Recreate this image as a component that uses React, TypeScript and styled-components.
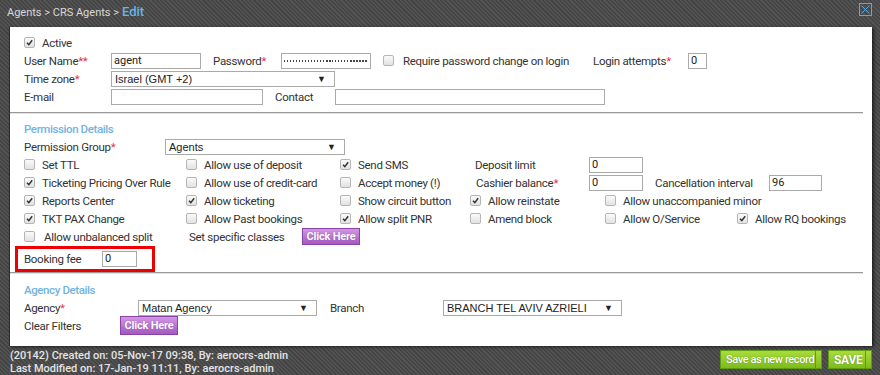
import React from 'react';
import styled, { createGlobalStyle } from 'styled-components';

const GlobalStyle = createGlobalStyle`
  html, body {
    margin: 0;
    padding: 0;
  }
  body {
    width: 880px;
    height: 375px;
    overflow: hidden;
    font-family: Roboto, "Liberation Sans", Arial, sans-serif;
    background-color: #4b4b4b;
    background-image: repeating-linear-gradient(
      45deg,
      #444 0px,
      #444 1.5px,
      #535353 1.5px,
      #535353 3px
    );
  }
`;

const Page = styled.div`
  width: 880px;
  height: 375px;
  display: flex;
  flex-direction: column;
  box-sizing: border-box;
  padding: 0 8px 0 9px;
`;

const TopBar = styled.div`
  height: 27px;
  display: flex;
  align-items: center;
  justify-content: space-between;
  margin-left: -2px;
`;

const Crumbs = styled.div`
  font-size: 11px;
  color: #d8d8d8;
  display: flex;
  align-items: baseline;
  gap: 3px;
  margin-top: -3px;
`;

const CrumbCurrent = styled.span`
  font-size: 13px;
  font-weight: 500;
  color: #66b4ea;
`;

const CloseBox = styled.div`
  width: 11px;
  height: 11px;
  border: 1px solid #5fa8d8;
  display: flex;
  align-items: center;
  justify-content: center;
  margin-top: -8px;
`;

const Panel = styled.div`
  background: #fff;
  border-left: 1px solid #2b2b2b;
  box-shadow: 2px 1px 3px rgba(0, 0, 0, 0.55);
  height: 320px;
  box-sizing: border-box;
  padding: 7px 0 0 14px;
  display: flex;
  flex-direction: column;
`;

const Row = styled.div`
  display: flex;
  align-items: center;
  height: 18px;
  font-size: 11.5px;
  letter-spacing: -0.3px;
  color: #333;
  white-space: nowrap;
`;

const Cell = styled.div<{ $w?: number; $pl?: number }>`
  display: flex;
  align-items: center;
  gap: 7px;
  flex: none;
  width: ${(p) => (p.$w ? `${p.$w}px` : 'auto')};
  padding-left: ${(p) => p.$pl || 0}px;
  box-sizing: border-box;
`;

const Req = styled.span`
  color: #e8304f;
`;

const Input = styled.div<{ $w: number }>`
  width: ${(p) => p.$w}px;
  height: 16px;
  box-sizing: border-box;
  border: 1px solid #aaa;
  font-family: Roboto, "Liberation Sans", Arial, sans-serif;
  font-size: 11px;
  letter-spacing: 0;
  color: #222;
  display: flex;
  align-items: center;
  padding: 0 2px;
  flex: none;
`;

const Dots = styled.div`
  flex: 1;
  height: 1.5px;
  background: repeating-linear-gradient(90deg, #444 0 1.5px, transparent 1.5px 3px);
`;

const Select = styled.div<{ $w: number }>`
  width: ${(p) => p.$w}px;
  height: 16px;
  box-sizing: border-box;
  border: 1px solid #aaa;
  font-family: "Liberation Sans", Arial, sans-serif;
  font-size: 11px;
  letter-spacing: 0;
  color: #222;
  display: flex;
  align-items: center;
  justify-content: space-between;
  padding: 1px 8px 0 3px;
  flex: none;

  &::after {
    content: '▼';
    font-size: 9px;
    color: #222;
  }
`;

const Box = styled.span`
  width: 11px;
  height: 11px;
  box-sizing: border-box;
  border: 1px solid #b5b5b5;
  border-radius: 2px;
  background: linear-gradient(#fafafa, #e2e2e2);
  display: inline-flex;
  align-items: center;
  justify-content: center;
  flex: none;
`;

const Hr = styled.div`
  height: 1px;
  background: #999;
  border-bottom: 1px solid #e2e2e2;
  margin: 0 9px 0 -14px;
`;

const Spacer = styled.div<{ $h: number }>`
  height: ${(p) => p.$h}px;
  flex: none;
`;

const SectionTitle = styled.div`
  height: 18px;
  display: flex;
  align-items: center;
  font-size: 11.5px;
  font-weight: 500;
  letter-spacing: -0.4px;
  color: #72b3e2;
`;

const PurpleButton = styled.div<{ $h?: number }>`
  width: 58px;
  height: ${(p) => p.$h || 17}px;
  box-sizing: border-box;
  border: 1px solid #8a44a6;
  background: linear-gradient(#d395e6, #a458c0);
  color: #fff;
  font-size: 11px;
  font-weight: 700;
  letter-spacing: -0.2px;
  display: flex;
  align-items: center;
  justify-content: center;
  text-shadow: 0 0 1px rgba(90, 30, 110, 0.6);
  flex: none;
`;

const FeeBox = styled.div`
  margin: 0 0 0 -9px;
  width: 140px;
  height: 26px;
  box-sizing: border-box;
  border: 3px solid #ee0000;
  display: flex;
  align-items: center;
  padding-left: 6px;
  font-size: 11.5px;
  letter-spacing: -0.3px;
  color: #333;
`;

const Footer = styled.div`
  flex: 1;
  display: flex;
  justify-content: space-between;
  padding-top: 3px;
`;

const Meta = styled.div`
  font-size: 11px;
  font-weight: 500;
  color: #e4e4e4;
  line-height: 13px;
  margin-left: 1px;
`;

const Buttons = styled.div`
  display: flex;
  gap: 6px;
  margin-top: 1px;
`;

const GreenButton = styled.div<{ $w: number; $bold?: boolean }>`
  width: ${(p) => p.$w}px;
  height: 19px;
  box-sizing: border-box;
  border: 1px solid #5f9a12;
  background: linear-gradient(#a8dc3c, #7cbc1a);
  color: #fff;
  font-size: ${(p) => (p.$bold ? 12 : 11)}px;
  font-weight: ${(p) => (p.$bold ? 700 : 500)};
  letter-spacing: ${(p) => (p.$bold ? '-0.3px' : '-0.4px')};
  white-space: nowrap;
  display: flex;
  align-items: center;
  padding-left: 5px;
  position: relative;
  text-shadow: 0 0 1px rgba(40, 80, 0, 0.7);

  &::after {
    content: '';
    position: absolute;
    right: 5px;
    top: 0;
    bottom: 0;
    width: 1px;
    background: #5f9a12;
  }
`;

const Check: React.FC<{ on?: boolean }> = ({ on }) => (
  <Box>
    {on && (
      <svg width="7" height="7" viewBox="0 0 7 7">
        <path d="M1 3.8 L2.8 5.6 L6.2 1.2" fill="none" stroke="#333" strokeWidth="1.5" />
      </svg>
    )}
  </Box>
);

const CheckCell: React.FC<{ w?: number; on?: boolean; label: string }> = ({ w, on, label }) => (
  <Cell $w={w}>
    <Check on={on} />
    <span>{label}</span>
  </Cell>
);

const App: React.FC = () => {
  return (
    <>
      <GlobalStyle />
      <Page>
        <TopBar>
          <Crumbs>
            <span>Agents &gt; CRS Agents &gt;</span>
            <CrumbCurrent>Edit</CrumbCurrent>
          </Crumbs>
          <CloseBox>
            <svg width="9" height="9" viewBox="0 0 9 9">
              <path d="M0.5 0.5 L8.5 8.5 M8.5 0.5 L0.5 8.5" stroke="#5fa8d8" strokeWidth="1" />
            </svg>
          </CloseBox>
        </TopBar>

        <Panel>
          <Row>
            <CheckCell on label="Active" />
          </Row>
          <Row>
            <Cell $w={87}>
              <span>
                User Name<Req>**</Req>
              </span>
            </Cell>
            <Input $w={90}>agent</Input>
            <Cell $w={80} $pl={12}>
              <span>
                Password<Req>*</Req>
              </span>
            </Cell>
            <Input $w={90}>
              <Dots />
            </Input>
            <Cell $w={222} $pl={12}>
              <Box />
              <span style={{ marginLeft: 2 }}>Require password change on login</span>
            </Cell>
            <Cell $w={95}>
              <span>
                Login attempts<Req>*</Req>
              </span>
            </Cell>
            <Input $w={19}>0</Input>
          </Row>
          <Row>
            <Cell $w={87}>
              <span>
                Time zone<Req>*</Req>
              </span>
            </Cell>
            <Select $w={224}>Israel (GMT +2)</Select>
          </Row>
          <Row>
            <Cell $w={87}>E-mail</Cell>
            <Input $w={152} />
            <Cell $w={72} $pl={12}>
              Contact
            </Cell>
            <Input $w={270} />
          </Row>

          <Spacer $h={6} />
          <Hr />
          <Spacer $h={6} />

          <SectionTitle>Permission Details</SectionTitle>
          <Row>
            <Cell $w={141}>
              <span>
                Permission Group<Req>*</Req>
              </span>
            </Cell>
            <Select $w={180}>Agents</Select>
          </Row>
          <Row>
            <CheckCell w={162} label="Set TTL" />
            <CheckCell w={154} label="Allow use of deposit" />
            <CheckCell w={135} on label="Send SMS" />
            <Cell $w={114}>Deposit limit</Cell>
            <Input $w={54}>0</Input>
          </Row>
          <Row>
            <CheckCell w={162} on label="Ticketing Pricing Over Rule" />
            <CheckCell w={154} label="Allow use of credit-card" />
            <CheckCell w={136} label="Accept money (!)" />
            <Cell $w={113}>
              <span>
                Cashier balance<Req>*</Req>
              </span>
            </Cell>
            <Input $w={54}>0</Input>
            <Cell $w={126} $pl={12}>
              Cancellation interval
            </Cell>
            <Input $w={53}>96</Input>
          </Row>
          <Row>
            <CheckCell w={162} on label="Reports Center" />
            <CheckCell w={154} on label="Allow ticketing" />
            <CheckCell w={130} label="Show circuit button" />
            <CheckCell w={135} on label="Allow reinstate" />
            <CheckCell label="Allow unaccompanied minor" />
          </Row>
          <Row>
            <CheckCell w={162} on label="TKT PAX Change" />
            <CheckCell w={154} label="Allow Past bookings" />
            <CheckCell w={130} on label="Allow split PNR" />
            <CheckCell w={135} label="Amend block" />
            <CheckCell w={132} label="Allow O/Service" />
            <CheckCell on label="Allow RQ bookings" />
          </Row>
          <Row>
            <Cell $w={165}>
              <Check />
              <span style={{ marginLeft: 2 }}>Allow unbalanced split</span>
            </Cell>
            <Cell $w={113}>Set specific classes</Cell>
            <PurpleButton>Click Here</PurpleButton>
          </Row>

          <FeeBox>
            <Cell $w={78}>Booking fee</Cell>
            <Input $w={35}>0</Input>
          </FeeBox>
          <Hr />
          <Spacer $h={7} />

          <SectionTitle>Agency Details</SectionTitle>
          <Row>
            <Cell $w={114}>
              <span>
                Agency<Req>*</Req>
              </span>
            </Cell>
            <Select $w={179}>Matan Agency</Select>
            <Cell $w={126} $pl={13}>
              Branch
            </Cell>
            <Select $w={179}>BRANCH TEL AVIV AZRIELI</Select>
          </Row>
          <Row>
            <Cell $w={96}>Clear Filters</Cell>
            <PurpleButton $h={19}>Click Here</PurpleButton>
          </Row>
        </Panel>

        <Footer>
          <Meta>
            <div>(20142) Created on: 05-Nov-17 09:38, By: aerocrs-admin</div>
            <div>Last Modified on: 17-Jan-19 11:11, By: aerocrs-admin</div>
          </Meta>
          <Buttons>
            <GreenButton $w={102}>Save as new record</GreenButton>
            <GreenButton $w={44} $bold>
              SAVE
            </GreenButton>
          </Buttons>
        </Footer>
      </Page>
    </>
  );
};

export default App;
